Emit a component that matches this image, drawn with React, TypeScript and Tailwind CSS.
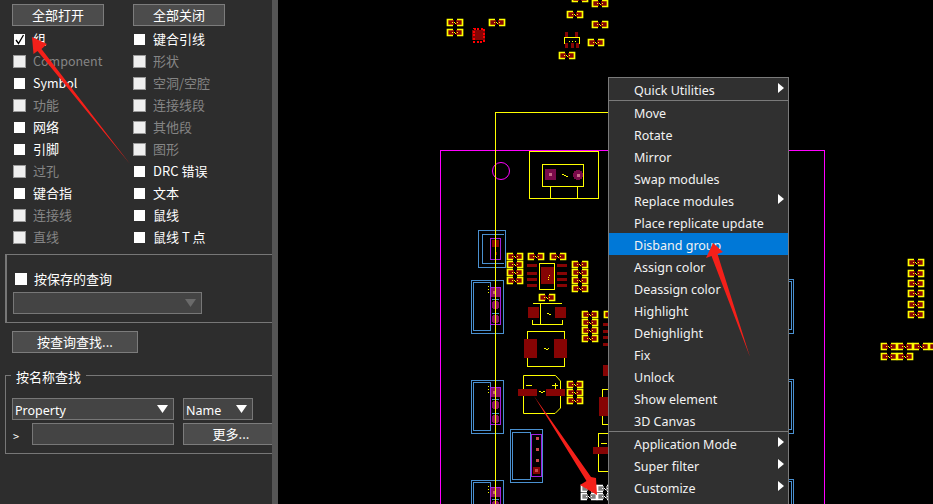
import React from "react";

const FONT = '"Noto Sans", "Noto Sans CJK SC", sans-serif';
const CJK = '"Noto Sans CJK SC", "Noto Sans", sans-serif';

function Check({ on, checked, label }: { on?: boolean; checked?: boolean; label: string }) {
  const latin = /^[A-Za-z]+$/.test(label);
  return (
    <div className="flex items-center h-[22px]">
      <span
        className={
          on
            ? "w-[13px] h-[13px] bg-white border border-[#2d2d2d] flex items-center justify-center shrink-0"
            : "w-[13px] h-[13px] bg-[#efefef] border border-[#9a9a9a] shrink-0"
        }
      >
        {checked && (
          <svg width="11" height="11" viewBox="0 0 11 11">
            <path d="M2 6 L4.5 9.5 L9.5 1" fill="none" stroke="#000" strokeWidth="1.3" />
          </svg>
        )}
      </span>
      <span
        className={`${on ? "text-white" : "text-[#858585]"} ${latin ? "text-[12.5px]" : "text-[13px]"} ml-[7px]`}
      >
        {label}
      </span>
    </div>
  );
}

function Btn({ w, label }: { w: string; label: string }) {
  return (
    <div className={`${w} h-[22px] shrink-0 bg-[#4c4c4c] border border-[#7c7c7c] text-white flex items-center justify-center`}>
      {label}
    </div>
  );
}

function Tri({ color }: { color: string }) {
  return (
    <svg width="11" height="8" viewBox="0 0 11 8" className="absolute right-[5px] top-[6px]">
      <path d="M0 0H11L5.5 8Z" fill={color} />
    </svg>
  );
}

const left: [string, boolean][] = [
  ["组", true],
  ["Component", false],
  ["Symbol", true],
  ["功能", false],
  ["网络", true],
  ["引脚", true],
  ["过孔", false],
  ["键合指", true],
  ["连接线", false],
  ["直线", false],
];
const right: [string, boolean][] = [
  ["键合引线", true],
  ["形状", false],
  ["空洞/空腔", false],
  ["连接线段", false],
  ["其他段", false],
  ["图形", false],
  ["DRC 错误", true],
  ["文本", true],
  ["鼠线", true],
  ["鼠线 T 点", true],
];

function Panel() {
  return (
    <div className="w-[272px] h-full shrink-0 bg-[#2d2d2d] text-[13px] overflow-hidden" style={{ fontFamily: CJK }}>
      <div className="flex pl-[12px] pt-[4px] gap-[29px]">
        <Btn w="w-[92px]" label="全部打开" />
        <Btn w="w-[92px]" label="全部关闭" />
      </div>
      <div className="grid grid-cols-[120px_120px] pl-[13px] pt-[2px]">
        <div>
          {left.map(([t, on], i) => (
            <Check key={t} label={t} on={on} checked={i === 0} />
          ))}
        </div>
        <div>
          {right.map(([t, on]) => (
            <Check key={t} label={t} on={on} />
          ))}
        </div>
      </div>
      <div className="ml-[5px] mt-[6px] h-[69px] border-l-2 border-t border-b border-[#777] pl-[6px] pt-[13px]">
        <div className="flex items-center h-[22px] pl-[2px]">
          <span className="w-[12px] h-[12px] bg-white shrink-0" />
          <span className="ml-[7px] text-white">按保存的查询</span>
        </div>
        <div className="relative w-[189px] h-[22px] mt-[2px] bg-[#444] border border-[#777]">
          <Tri color="#6a6a6a" />
        </div>
      </div>
      <div className="pl-[12px] mt-[8px]">
        <Btn w="w-[126px]" label="按查询查找..." />
      </div>
      <div className="relative ml-[5px] mt-[22px] h-[79px] border-l border-t border-b border-[#777] pl-[6px] pt-[22px]">
        <span className="absolute left-[5px] top-[-8px] px-[5px] bg-[#2d2d2d] text-white leading-[18px]">按名称查找</span>
        <div className="flex gap-[9px]">
          <div className="relative shrink-0 w-[162px] h-[22px] bg-[#444] border border-[#777] text-[12.5px] text-white pl-[2px] leading-[24px]" style={{ fontFamily: FONT }}>
            Property
            <Tri color="#fff" />
          </div>
          <div className="relative shrink-0 w-[70px] h-[22px] bg-[#444] border border-[#777] text-[12.5px] text-white pl-[2px] leading-[24px]" style={{ fontFamily: FONT }}>
            Name
            <Tri color="#fff" />
          </div>
        </div>
        <div className="flex mt-[3px]">
          <span className="w-[20px] shrink-0 text-[11px] text-white pl-[1px] leading-[26px]">&gt;</span>
          <div className="w-[142px] shrink-0 h-[22px] bg-[#444] border border-[#777]" />
          <div className="ml-[9px] shrink-0">
            <Btn w="w-[96px]" label="更多..." />
          </div>
        </div>
      </div>
    </div>
  );
}

const chips: [number, number][] = [
  [447, 19], [447, 29], [489, 19], [567, 11], [592, 0], [592, 21], [588, 39], [559, 52], [572, -5],
  [507, 253], [507, 261], [507, 269], [507, 277], [528, 253], [550, 253],
  [572, 261], [572, 269], [572, 277], [572, 285], [539, 294],
  [582, 311], [582, 319], [582, 327], [582, 335], [604, 311],
  [567, 381], [567, 389], [567, 397],
  [908, 259], [908, 270], [908, 280], [908, 290], [908, 301], [908, 311],
  [881, 343], [897, 343], [913, 343], [929, 343], [881, 353], [897, 353],
];

function Chip({ x, y, line = "#ffff00", pad = "#860404" }: { x: number; y: number; line?: string; pad?: string }) {
  return (
    <g>
      <rect x={x + 1} y={y + 1} width={6} height={5} fill={pad} />
      <rect x={x + 9} y={y + 1} width={6} height={5} fill={pad} />
      <path
        d={`M${x + 6} ${y + 0.5}H${x + 0.5}V${y + 6.5}H${x + 6}M${x + 10} ${y + 0.5}H${x + 15.5}V${y + 6.5}H${x + 10}`}
        fill="none"
        stroke={line}
        strokeWidth="1.7"
        shapeRendering="auto"
      />
      <path d={`M${x + 5} ${y + 3.5}h1M${x + 7} ${y + 3.5}h1M${x + 8} ${y + 4.5}h1M${x + 10} ${y + 3.5}h1`} stroke={line} />
    </g>
  );
}

const BLUE = "#4a90d0";

function Conn({ y }: { y: number }) {
  return (
    <g>
      <path d={`M503.5 ${y + 0.5}H471.5V${y + 53.5}H503.5V${y + 0.5}`} fill="none" stroke={BLUE} strokeWidth="1.3" />
      <path d={`M490.5 ${y + 2.5}H473.5V${y + 50.5}H490.5V${y + 2.5}`} fill="none" stroke={BLUE} strokeWidth="1.3" />
      <rect x={491} y={y + 8} width={9} height={9} fill="#8b0f5f" />
      <rect x={490.5} y={y + 7.5} width={10} height={37} fill="none" stroke="#a020e0" strokeWidth="1.5" />
      <circle cx={495.5} cy={y + 25} r={4} fill="#8b0f5f" />
      <circle cx={495.5} cy={y + 39} r={4} fill="#8b0f5f" />
      <rect x={493} y={y + 11} width={3} height={3} fill="#c86a6a" />
      <path d={`M492 ${y + 19.5}H499M492 ${y + 33.5}H499`} stroke={BLUE} />
      <path d={`M488.5 ${y + 6}v1M488.5 ${y + 9}v1M488.5 ${y + 12}v1`} stroke="#ffff00" strokeWidth="1.5" />
    </g>
  );
}

function Board() {
  const Y = "#ffff00";
  const M = "#ff00ff";
  const R = "#860404";
  return (
    <svg width="655" height="504" viewBox="278 0 655 504" className="block" shapeRendering="crispEdges">
      <path d="M440.5 504V150.5H824.5V504" fill="none" stroke={M} />
      <circle cx="501" cy="171" r="8.5" fill="none" stroke={M} shapeRendering="auto" />
      {chips.map(([x, y]) => (
        <Chip key={`${x}-${y}`} x={x} y={y} />
      ))}
      {/* red QFN */}
      <rect x="472" y="30" width="13" height="10" fill={R} />
      <rect x="473.5" y="28.5" width="10" height="13" fill="none" stroke="#ff0000" strokeWidth="2" strokeDasharray="2 1.5" />
      {/* small IC top */}
      <path d="M564.5 44V37.5H579.5V44" fill="none" stroke={Y} />
      <path d="M565 32h3v5h-3zM575 32h3v5h-3zM565 43h3v5h-3zM571 43h3v5h-3zM576 43h3v5h-3z" fill={R} />
      <path d="M569 41h1M572 41h1M575 41h1" stroke={Y} />
      {/* top module */}
      <path d="M598 198.5H529.5V151.5H598.5V198.5" fill="none" stroke={Y} />
      <rect x="542.5" y="164.5" width="41" height="22" fill="none" stroke={Y} />
      <path d="M550.5 187V198M577.5 187V198" stroke={Y} />
      <rect x="545" y="169" width="11" height="11" fill="#7a0a4a" />
      <rect x="549" y="173" width="3" height="3" fill="#c86a8a" />
      <circle cx="578" cy="175" r="5" fill="#7a0a4a" />
      <rect x="577" y="174" width="3" height="3" fill="#c86a8a" />
      <path d="M562 174h2M564 175h2M566 176h2" stroke={Y} />
      {/* top connector */}
      <path d="M505.5 230.5H478.5V267.5H505.5V230.5" fill="none" stroke={BLUE} strokeWidth="1.3" />
      <path d="M504 234.5H482.5V263.5H504" fill="none" stroke={BLUE} strokeWidth="1.3" />
      <rect x="490.5" y="238.5" width="10" height="21" fill="none" stroke="#a020e0" strokeWidth="1.5" />
      <rect x="492" y="240" width="7" height="7" fill={R} />
      <rect x="495" y="252" width="2" height="3" fill={R} />
      <Conn y={280} />
      <Conn y={380} />
      <Conn y={480} />
      <path d="M608 112.5H495.5V504" fill="none" stroke={Y} />
      {/* 4th connector */}
      <rect x="510.5" y="429.5" width="32" height="53" fill="none" stroke={BLUE} strokeWidth="1.3" />
      <rect x="512.5" y="432.5" width="18" height="47" fill="none" stroke={BLUE} strokeWidth="1.3" />
      <rect x="531.5" y="434.5" width="10" height="42" fill="none" stroke="#a020e0" strokeWidth="1.5" />
      <path d="M536 437h3v3h-3zM536 448h3v3h-3zM536 459h3v3h-3z" fill="#c84a4a" />
      <rect x="533" y="467" width="7" height="7" fill={R} />
      <rect x="535" y="469" width="3" height="3" fill="#c84a4a" />
      {/* IC */}
      <rect x="539.5" y="263.5" width="15" height="26" fill="none" stroke={Y} />
      <rect x="541" y="267" width="13" height="17" fill={R} />
      <path d="M549 275h1M548 277h1M548 279h1" stroke={Y} />
      <path d="M527 264h10v3h-10zM527 272h10v3h-10zM527 278h10v3h-10zM527 284h10v3h-10zM557 264h10v3h-10zM557 272h10v3h-10zM557 278h10v3h-10zM557 284h10v3h-10z" fill={R} />
      <path d="M603 323h5v3h-5zM603 330h5v3h-5zM603 336h5v3h-5zM603 343h5v3h-5z" fill={R} />
      {/* diode */}
      <path d="M533 303.5H562M540.5 303V324.5M532.5 320V324.5H562.5V320" fill="none" stroke={Y} />
      <rect x="528" y="307" width="11" height="11" fill={R} />
      <rect x="555" y="307" width="11" height="11" fill={R} />
      <path d="M547 313h2M549 314h2" stroke={Y} />
      {/* inductor/cap */}
      <path d="M527.5 339V331.5H564.5V339M527.5 358V366.5H564.5V358" fill="none" stroke={Y} />
      <rect x="524" y="339" width="13" height="19" fill={R} />
      <rect x="554" y="339" width="13" height="19" fill={R} />
      <path d="M544 348h2M546 349h2M548 348h1" stroke={Y} />
      {/* electrolytic */}
      <path d="M523.5 389V375.5H555.5L560.5 381V389M523.5 396V413.5H555L560.5 408V396" fill="none" stroke={Y} shapeRendering="auto" />
      <path d="M526 385.5H532M552 385.5H558M555 382.5V388.5" stroke={Y} />
      <rect x="518" y="389" width="19" height="7" fill={R} />
      <rect x="546" y="389" width="19" height="7" fill={R} />
      <path d="M539 391h2M541 392h2M543 391h2" stroke={Y} />
      {/* right partials */}
      <path d="M608 389.5H602.5V424.5H608" fill="none" stroke={Y} />
      <rect x="599" y="397" width="9" height="19" fill={R} />
      <rect x="603" y="365" width="5" height="11" fill={R} />
      <path d="M608 433.5H598.5V471.5H608M601 443.5H607" fill="none" stroke={Y} />
      <rect x="593" y="447" width="15" height="7" fill={R} />
      {/* connectors right of menu */}
      <path d="M788 279.5H793.5V333.5H788M788 281.5H791.5V329.5H788" fill="none" stroke={BLUE} />
      <path d="M788 379.5H793.5V433.5H788M788 381.5H791.5V429.5H788" fill="none" stroke={BLUE} />
      <path d="M788 479.5H793.5V504M788 481.5H791.5V504" fill="none" stroke={BLUE} />
      {/* selected */}
      <Chip x={581} y={485} line="#ffffff" pad="#808080" />
      <Chip x={597} y={485} line="#ffffff" pad="#808080" />
      <Chip x={581} y={493} line="#ffffff" pad="#808080" />
      <Chip x={597} y={493} line="#ffffff" pad="#808080" />
    </svg>
  );
}

const menuA = ["Move", "Rotate", "Mirror", "Swap modules", "Replace modules", "Place replicate update", "Disband group", "Assign color", "Deassign color", "Highlight", "Dehighlight", "Fix", "Unlock", "Show element", "3D Canvas"];

function Item({ label, sub, hi }: { label: string; sub?: boolean; hi?: boolean }) {
  return (
    <div className={hi ? "relative h-[22px] pl-[25px] leading-[26px] bg-[#0078d7]" : "relative h-[22px] pl-[25px] leading-[26px]"}>
      {label}
      {sub && (
        <svg width="6" height="10" viewBox="0 0 6 10" className="absolute right-[4px] top-[5px]">
          <path d="M0 0L6 5L0 10Z" fill="#fff" />
        </svg>
      )}
    </div>
  );
}

function Menu() {
  return (
    <div
      className="absolute left-[608px] top-[77px] w-[181px] h-[440px] bg-[#303030] border border-[#7a7a7a] text-[12.5px] text-[#f2f2f2]"
      style={{ fontFamily: FONT }}
    >
      <Item label="Quick Utilities" sub />
      <div className="h-px bg-[#7a7a7a]" />
      {menuA.map((m) => (
        <Item key={m} label={m} sub={m === "Replace modules"} hi={m === "Disband group"} />
      ))}
      <div className="h-px bg-[#7a7a7a]" />
      <Item label="Application Mode" sub />
      <Item label="Super filter" sub />
      <Item label="Customize" sub />
    </div>
  );
}

function Arrows() {
  return (
    <svg width="933" height="504" viewBox="0 0 933 504" className="absolute left-0 top-0 pointer-events-none">
      <path d="M32 37 L47 44 L41.5 49 L130 164 L37.5 51 L33.5 54 Z" fill="#f4201a" />
      <path d="M713 243 L723 252 L717.5 254 L750 357 L711.5 256 L706 258 Z" fill="#f4201a" />
      <path d="M597 495 L580 485 L586.5 481 L534 396 L591 477 L596 478 Z" fill="#f4201a" />
    </svg>
  );
}

export default function App() {
  return (
    <div className="relative w-[933px] h-[504px] overflow-hidden flex bg-black">
      <Panel />
      <div className="w-[6px] h-full shrink-0 bg-[#555]" />
      <div className="flex-1 h-full bg-black">
        <Board />
      </div>
      <Menu />
      <Arrows />
    </div>
  );
}
